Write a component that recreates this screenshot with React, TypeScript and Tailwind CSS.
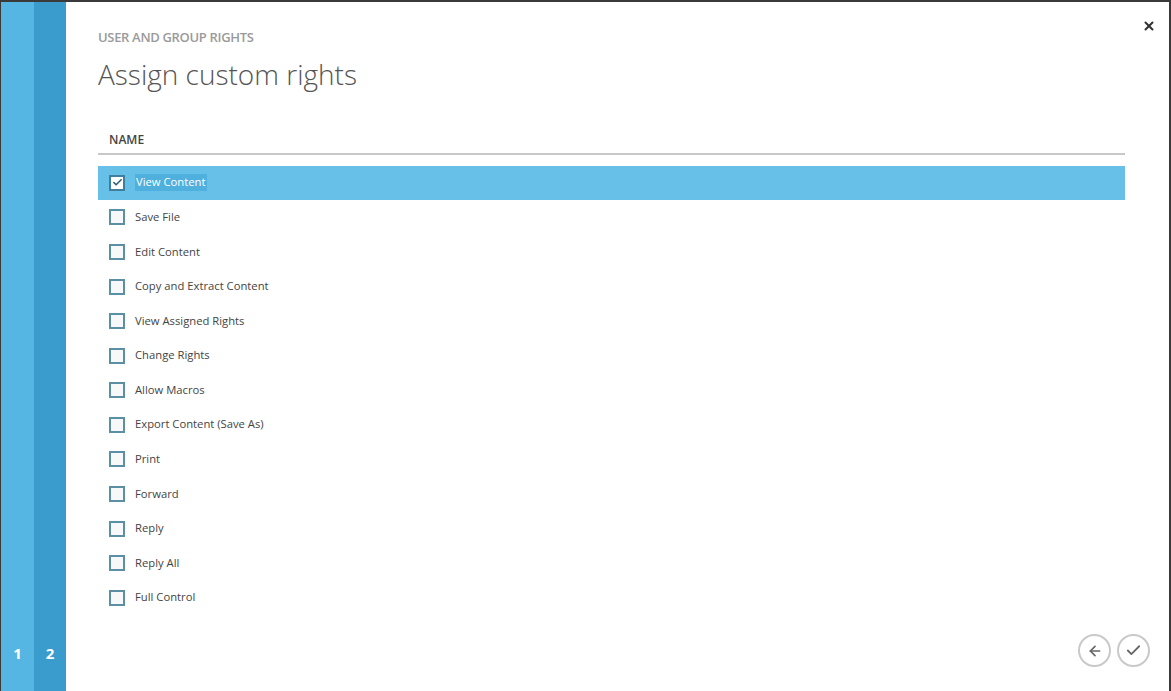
import { ArrowLeft, Check, X } from 'lucide-react';

const rights = [
  'View Content',
  'Save File',
  'Edit Content',
  'Copy and Extract Content',
  'View Assigned Rights',
  'Change Rights',
  'Allow Macros',
  'Export Content (Save As)',
  'Print',
  'Forward',
  'Reply',
  'Reply All',
  'Full Control',
];

function RightRow({ label, checked }: { label: string; checked: boolean }) {
  return (
    <div
      className={`flex h-[34.58px] items-center pl-[11px] ${checked ? 'bg-[#66c0e8]' : ''}`}
    >
      <span
        className={`flex h-[16px] w-[16px] items-center justify-center border-2 ${
          checked ? 'border-[#3d7f9c] bg-white' : 'border-[#5b8fa3] bg-[#f6f8f9]'
        }`}
      >
        {checked && <Check className="h-[11px] w-[11px] text-[#2d5f77]" strokeWidth={3.5} />}
      </span>
      <span
        className={`ml-[10px] text-[11.25px] ${
          checked ? 'bg-[#4fb0de] px-[1px] text-white' : 'text-[#444]'
        }`}
      >
        {label}
      </span>
    </div>
  );
}

export default function App() {
  return (
    <div
      className="flex h-[691px] w-[1171px] overflow-hidden border-t-2 border-r-2 border-l border-[#3a3a3a] bg-white"
      style={{ fontFamily: '"Open Sans", "Noto Sans", sans-serif' }}
    >
      {/* Step rail */}
      <div className="flex w-[33px] flex-col justify-end bg-[#55b6e4] pb-[27px]">
        <span className="text-center text-[15px] font-bold text-white">1</span>
      </div>
      <div className="flex w-[32px] flex-col justify-end bg-[#3a9ccd] pb-[27px]">
        <span className="text-center text-[15px] font-bold text-white">2</span>
      </div>

      {/* Main panel */}
      <div className="flex flex-1 flex-col pl-[32px] pr-[44px]">
        <div className="flex items-start justify-between pt-[26px]">
          <div className="text-[13px] font-semibold tracking-tight text-[#9a9a9a]">
            USER AND GROUP RIGHTS
          </div>
          <X className="mr-[-31px] mt-[-9px] h-[14px] w-[14px] text-[#333]" strokeWidth={3.5} />
        </div>
        <h1 className="mt-[8px] text-[28px] font-light leading-[36px] text-[#555]">
          Assign custom rights
        </h1>

        <div className="mt-[39px] pl-[11px] text-[12px] font-semibold text-[#444]">NAME</div>
        <div className="mt-[4px] h-[2px] bg-[#c8c8c8]" />

        <div className="mt-[11px] flex flex-col">
          {rights.map((r, i) => (
            <RightRow key={r} label={r} checked={i === 0} />
          ))}
        </div>

        <div className="mt-auto mb-[24px] mr-[-25px] flex justify-end gap-[6px]">
          <button className="flex h-[33px] w-[33px] items-center justify-center rounded-full border-2 border-[#c9c9c9] text-[#666]">
            <ArrowLeft className="h-[16px] w-[16px]" strokeWidth={2.5} />
          </button>
          <button className="flex h-[33px] w-[33px] items-center justify-center rounded-full border-2 border-[#c9c9c9] text-[#666]">
            <Check className="h-[17px] w-[17px]" strokeWidth={2.5} />
          </button>
        </div>
      </div>
    </div>
  );
}
